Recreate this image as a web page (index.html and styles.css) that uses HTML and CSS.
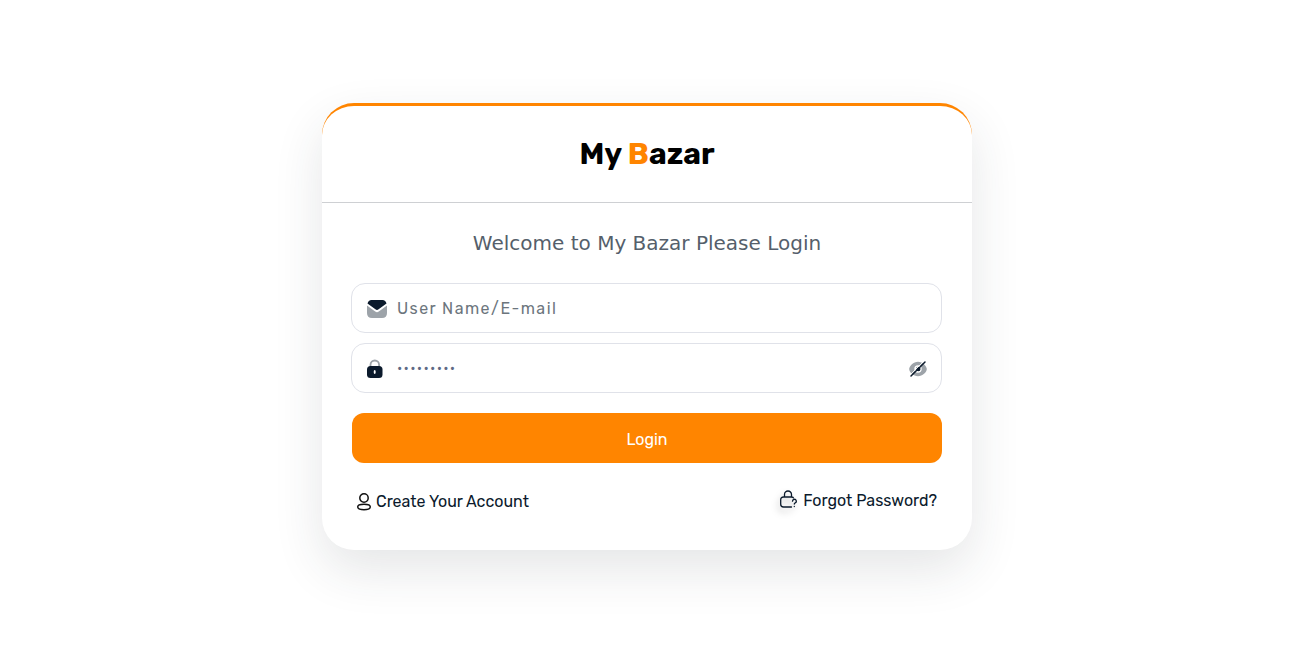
FILE: index.html
```html
<!DOCTYPE html>
<html lang="en">
<head>
<meta charset="utf-8">
<meta name="viewport" content="width=device-width, initial-scale=1">
<title>My Bazar - Login</title>
<link rel="stylesheet" href="styles.css">
</head>
<body>
<main class="card">
  <header class="card-header">
    <h1 class="brand">My <span class="brand-accent">B</span>azar</h1>
  </header>
  <form class="card-body">
    <h2 class="welcome">Welcome to My Bazar Please Login</h2>
    <div class="field">
      <svg class="field-icon" width="20" height="20" viewBox="0 0 20 20" aria-hidden="true">
        <path fill="#9da3a9" d="M0 6.5 8.2 12.6Q10 13.9 11.8 12.6L20 6.5V14Q20 19 15 19H5Q0 19 0 14Z"/>
        <path fill="#0b1a2c" d="M4.5 1H15.5Q18.6 1 19.5 4.5L11.6 10.3Q10 11.5 8.4 10.3L.5 4.5Q1.4 1 4.5 1Z"/>
      </svg>
      <input class="input" type="text" placeholder="User Name/E-mail" aria-label="User Name/E-mail">
    </div>
    <div class="field">
      <svg class="field-icon" width="20" height="20" viewBox="0 0 20 20" aria-hidden="true">
        <path fill="none" stroke="#9da3a9" stroke-width="1.8" d="M3.500 8V5.800a4.300 4.300 0 0 1 8.600 0V8"/>
        <rect fill="#0b1a2c" y="7" width="15.500" height="12" rx="3.500"/>
        <ellipse fill="#fff" cx="7.700" cy="13" rx="1" ry="2"/>
      </svg>
      <input class="input input-password" type="password" placeholder="•••••••••" aria-label="Password">
      <button class="toggle" type="button" aria-label="Show password">
        <svg width="20" height="20" viewBox="0 0 20 20" aria-hidden="true">
          <path fill="#9da3a9" fill-rule="evenodd" d="M10 2.700C5.500 2.700 1.200 7 1.200 10s4.300 7.300 8.800 7.300 8.800-4.300 8.800-7.300S14.500 2.700 10 2.700Zm0 3.600a3.700 3.700 0 1 1 0 7.400 3.700 3.700 0 0 1 0-7.400Z"/>
          <circle fill="#0b1a2c" cx="10.300" cy="10" r="2.200"/>
          <path stroke="#fff" stroke-width="1" d="M1.800 16.300 16.300 1.800"/>
          <path stroke="#0b1a2c" stroke-width="1.500" stroke-linecap="round" d="M3 17 17 3"/>
        </svg>
      </button>
    </div>
    <button class="submit" type="submit">Login</button>
    <nav class="links">
      <a class="link link-create" href="#create">
        <svg width="16" height="18" viewBox="0 0 16 18" fill="none" stroke="#111" stroke-width="1.500" aria-hidden="true">
          <circle cx="8" cy="5" r="4.200"/>
          <ellipse cx="8" cy="14" rx="6.300" ry="2.700"/>
        </svg>
        <span>Create Your Account</span>
      </a>
      <a class="link link-forgot" href="#forgot">
        <svg class="lock-help" width="18" height="22" viewBox="0 0 18 22" fill="none" stroke="#0b1a2c" stroke-width="1.300" stroke-linecap="round" aria-hidden="true">
          <path d="M5.500 7V4.500a3.500 3.500 0 0 1 7 0V7M14.500 8Q14 7 12.500 7H4.500Q1.700 7 1.700 9.800V14.200Q1.700 17 4.500 17H12.500"/>
          <path d="M13.500 11.200a1.900 1.900 0 1 1 2.700 1.700q-.9.300-.9 1.100M15.300 16.500v.1"/>
        </svg>
        <span>Forgot Password?</span>
      </a>
    </nav>
  </form>
</main>
</body>
</html>
```
FILE: styles.css
```css
* {
  box-sizing: border-box;
}

body {
  margin: 0;
  min-height: 100vh;
  padding: 0 16px 3px;
  display: flex;
  align-items: center;
  justify-content: center;
  background: #fff;
  color: #0b1a2c;
  font: 16px/24px Rubik, Roboto, "Liberation Sans", sans-serif;
}

.card {
  width: 100%;
  max-width: 650px;
  border-top: 3px solid #ff8500;
  border-radius: 32px;
  background: #fff;
  box-shadow: 0 20px 50px rgba(38, 50, 56, 0.12);
}

.card-header {
  padding: 29px 30px 28px;
  border-bottom: 1px solid #ced0d3;
  text-align: center;
}

.brand {
  margin: 0;
  color: #000;
  font: 700 30px/39px Rubik, Inter, sans-serif;
}

.brand-accent {
  color: #ff8500;
}

.card-body {
  display: flex;
  flex-direction: column;
  gap: 10px;
  padding: 25px 30px 36px;
}

.welcome {
  margin: 0 0 15px;
  color: #555f6b;
  font: 400 20px/30px "DejaVu Sans", sans-serif;
  text-align: center;
}

.field {
  display: flex;
  align-items: center;
  gap: 10px;
  height: 50px;
  margin: 0 0 0 -1px;
  padding: 2px 13px 0 15px;
  border: 1px solid #e0e2e9;
  border-radius: 14px;
}

.field-icon {
  flex: none;
}

.input {
  flex: 1;
  min-width: 0;
  padding: 0;
  border: 0;
  outline: 0;
  background: transparent;
  color: #0b1a2c;
  font: inherit;
  letter-spacing: 0.09em;
}

.input::placeholder {
  color: #6c757d;
  opacity: 1;
}

.input-password {
  font-size: 14px;
}

.input-password::placeholder {
  color: #5e6985;
}

.toggle {
  display: flex;
  padding: 0;
  border: 0;
  background: none;
  cursor: pointer;
}

.submit {
  height: 50px;
  margin-top: 10px;
  padding: 3px 0 0;
  border: 0;
  border-radius: 12px;
  background: #ff8500;
  color: #fff;
  font: inherit;
  cursor: pointer;
}

.links {
  display: flex;
  align-items: flex-start;
  justify-content: space-between;
  flex-wrap: wrap;
  gap: 10px;
  padding: 16px 5px 0 4px;
}

.link {
  display: flex;
  align-items: center;
  gap: 4px;
  color: inherit;
  text-decoration: none;
}

.link-create {
  padding-top: 1px;
}

.link-forgot {
  gap: 6px;
}

.lock-help {
  filter: drop-shadow(-2px 4px 3px rgba(0, 0, 0, 0.25));
}
```
